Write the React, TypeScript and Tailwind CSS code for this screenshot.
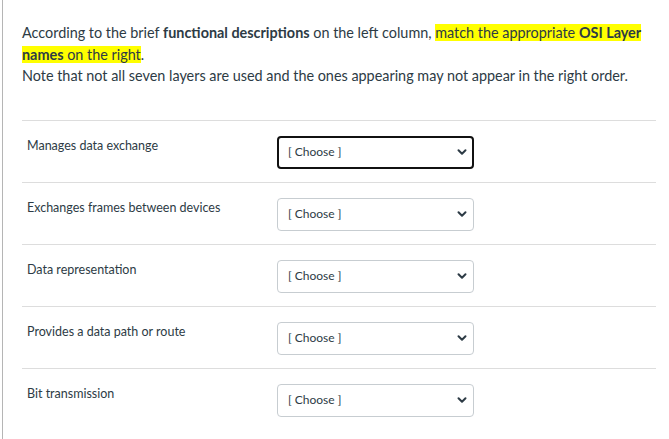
const rows = [
  "Manages data exchange",
  "Exchanges frames between devices",
  "Data representation",
  "Provides a data path or route",
  "Bit transmission",
];

function Chevron() {
  return (
    <svg width="10" height="10" viewBox="0 0 10 10" className="text-[#2d3b45]">
      <path d="M1.5 3.2 L5 6.7 L8.5 3.2" fill="none" stroke="currentColor" strokeWidth="2" strokeLinecap="round" strokeLinejoin="round" />
    </svg>
  );
}

export default function App() {
  return (
    <div className="min-h-[439px] w-[669px] bg-white font-['Lato','Noto_Sans',sans-serif] text-[#2d3b45]">
      <div className="ml-[2px] min-h-[439px] border-l border-[#b5b5b5] pl-[19px] pr-[13px] pt-[22px]">
        <div className="text-[14.4px] leading-[21.5px]">
          <p>
            According to the brief <strong className="font-bold">functional descriptions</strong> on the left column,{" "}
            <span className="bg-[#ffff00]">
              match the appropriate <strong className="font-bold">OSI Layer names</strong> on the right
            </span>
            .
          </p>
          <p>Note that not all seven layers are used and the ones appearing may not appear in the right order.</p>
        </div>

        <div className="mt-[33px]">
          {rows.map((label, i) => (
            <div key={label} className="flex border-t border-[#dddddd] pb-[13px] pt-[15px]">
              <div className="w-[255px] pl-[5px] pt-[1px] text-[12.5px] leading-[18px]">{label}</div>
              <div
                className={
                  i === 0
                    ? "flex h-[33px] w-[197px] items-center justify-between rounded-[4px] border-2 border-[#111] pl-[9px] pr-[5px]"
                    : "flex h-[33px] w-[197px] items-center justify-between rounded-[4px] border border-[#c7cdd1] pl-[10px] pr-[6px]"
                }
              >
                <span className="text-[12px]">[ Choose ]</span>
                <Chevron />
              </div>
            </div>
          ))}
        </div>
      </div>
    </div>
  );
}
